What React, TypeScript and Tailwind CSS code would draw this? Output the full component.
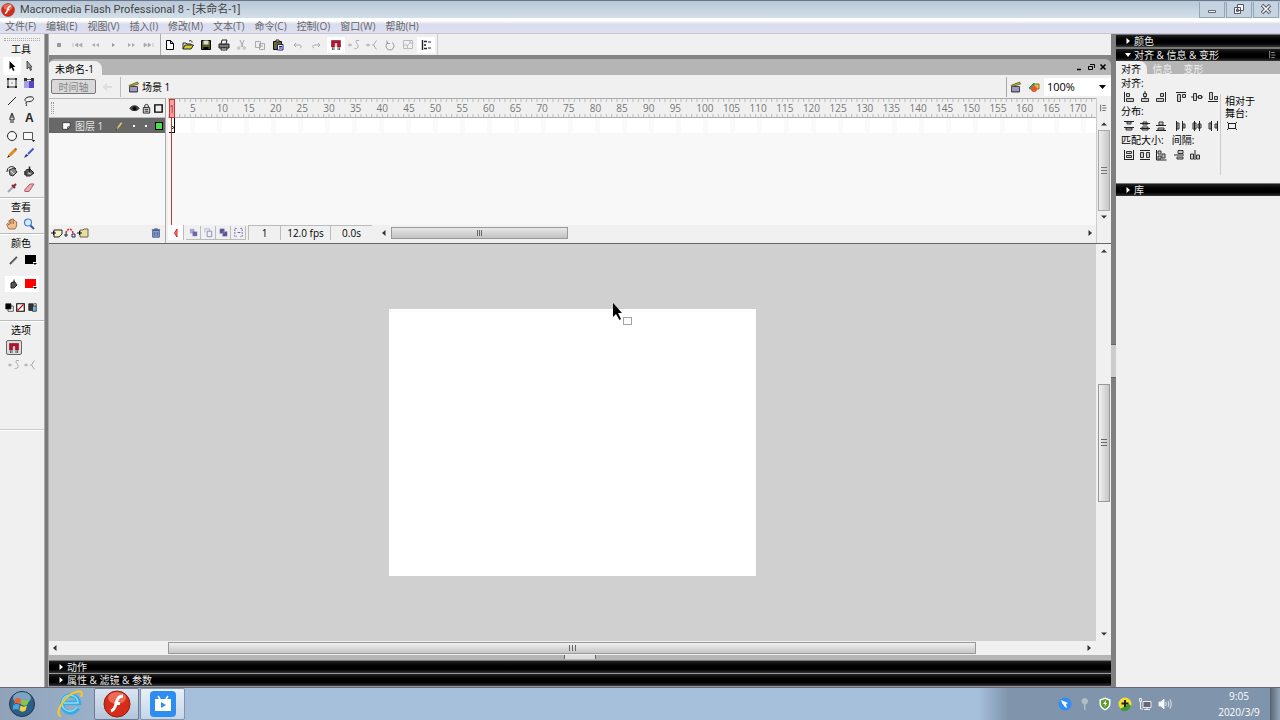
import { type ReactNode } from 'react';

const sans = "font-['Open_Sans','Noto_Sans_CJK_SC',sans-serif]";

const menus = ['文件(F)', '编辑(E)', '视图(V)', '插入(I)', '修改(M)', '文本(T)', '命令(C)', '控制(O)', '窗口(W)', '帮助(H)'];

const rulerMarks = Array.from({ length: 34 }, (_, i) => (i + 1) * 5);
const frames = Array.from({ length: 175 }, (_, i) => i);

interface Item {
    name: string;
    icon: ReactNode;
    active?: boolean;
}

function Icon({ children, className = 'size-3' }: { children: ReactNode; className?: string }) {
    return (
        <svg viewBox="0 0 12 12" className={`${className} shrink-0`} fill="none" stroke="#222" aria-hidden="true">
            {children}
        </svg>
    );
}

const magnet = (
    <Icon>
        <path d="M1.5 1.5h9V8h-3V4h-3v4h-3z" fill="#b5122c" stroke="#7c1226" strokeWidth=".6" />
        <path d="M2.5 8.5v2.5M4 8.5V11M8 8.500V11M9.500 8.500V11" stroke="#555" />
        <path d="M6 5v3" stroke="#caa" />
    </Icon>
);
const smooth = (
    <Icon>
        <path d="M0 6h4M2 4.5v3M11 1.5H8.5c-2 2 2.5 4 1.5 6.5-.5 1.500-2 2-3.500 1.500" stroke="#aaa" />
    </Icon>
);
const straighten = (
    <Icon>
        <path d="M0 6h4M2 4.5v3M10.5 1.5 7.5 6l3 4.5M7.5 6H6" stroke="#aaa" />
    </Icon>
);
const arrowIcon = (
    <Icon>
        <path d="M3.5 1v8.5l2-2 1.500 3.500 1.500-.7L7 7h2.500z" fill="#000" stroke="none" />
    </Icon>
);
const clapper = (
    <Icon>
        <path d="M1.500 5.500h8v5.500h-8z" fill="#6a6496" stroke="#444" />
        <path d="M1 4.500 9.500 1l1 2L2 5.500z" fill="#b5b93c" stroke="#55561c" strokeWidth=".8" />
        <path d="M2 7h7M2 9h7" stroke="#d4d1ea" />
    </Icon>
);

const playback: Item[] = [
    { name: '停止', icon: <Icon><path d="M4 4h4v4H4z" fill="#999" stroke="none" /></Icon> },
    { name: '后退', icon: <Icon><path d="M2 4v4M7 4v4L4 6zM11 4v4L8 6z" fill="#aaa" stroke="#aaa" strokeWidth=".6" /></Icon> },
    { name: '后退一帧', icon: <Icon><path d="M6 4v4L3 6zM10 4v4L7 6z" fill="#aaa" stroke="none" /></Icon> },
    { name: '播放', icon: <Icon><path d="M5 4v4l3-2z" fill="#999" stroke="none" /></Icon> },
    { name: '前进一帧', icon: <Icon><path d="M3 4v4l3-2zM7 4v4l3-2z" fill="#aaa" stroke="none" /></Icon> },
    { name: '转到结尾', icon: <Icon><path d="M1 4v4l3-2zM5 4v4l3-2zM10 4v4" fill="#aaa" stroke="#aaa" strokeWidth=".6" /></Icon> },
];

const fileTools: Item[] = [
    { name: '新建', icon: <Icon><path d="M2.500 1.500h4l3 3v6h-7zM6.500 1.500v3h3" fill="#fff" stroke="#000" /></Icon> },
    { name: '打开', icon: <Icon><path d="M1 10V4h3l1 1h4v2M7 2c2-1 3 0 3 1.500" stroke="#222" /><path d="m1 10 2-4h8.500l-2.500 4z" fill="#d6cf22" stroke="#222" /></Icon> },
    { name: '保存', icon: <Icon><path d="M1.500 1.500h9v9h-9z" fill="#555b12" stroke="#000" /><path d="M3.500 1.500h5v4h-5z" fill="#ddd" stroke="none" /><path d="M3.500 8h5v3h-5z" fill="#000" stroke="none" /></Icon> },
    { name: '打印', icon: <Icon><path d="M1 5h10v4H1z" fill="#777" /><path d="m3 5 1-4h5L8 5zM3 9h6v2H3z" fill="#eee" /></Icon> },
    { name: '剪切', icon: <Icon><path d="m4 1 3 7M8 1 5 8M4 9a1.200 1.200 0 1 0 0 .1M9.500 9a1.200 1.200 0 1 0 0 .1" stroke="#aaa" /></Icon> },
    { name: '复制', icon: <Icon><path d="M1.500 2.500h5v6h-5zM5.500 4.500h5v6h-5zM7 7h2" fill="#eee" stroke="#aaa" /></Icon> },
    { name: '粘贴', icon: <Icon><path d="M1.500 2.500h8v8h-8z" fill="#6c6a2a" stroke="#111" /><path d="M4 1h3v2H4z" fill="#ddd" /><path d="M5.500 5.500h5.500v5.500H5.500z" fill="#fff" stroke="#1b1b80" /><path d="M7 7.500h3M7 9h3" stroke="#1b1b80" /></Icon> },
];
const undoTools: Item[] = [
    { name: '撤消', icon: <Icon><path d="M4 4 2 6l2 2M2 6h5c3 0 3 2.500 1 3" stroke="#aaa" /></Icon> },
    { name: '重做', icon: <Icon><path d="m8 4 2 2-2 2M10 6H5c-3 0-3 2.500-1 3" stroke="#aaa" /></Icon> },
];
const modifyTools: Item[] = [
    { name: '贴紧至对象', icon: magnet, active: true },
    { name: '平滑', icon: smooth },
    { name: '伸直', icon: straighten },
    { name: '旋转与倾斜', icon: <Icon><path d="M4 3.500a4 4 0 1 0 4 0M3 1.500v3h3" stroke="#999" /></Icon> },
    { name: '缩放', icon: <Icon><path d="M1.500 1.500h9v8h-9zM1.500 6h4v3.500M6 6l3-3M7 3h2v2" stroke="#bbb" /></Icon> },
    { name: '对齐', icon: <Icon><path d="M2.500 1v10M4 2.500h3M4 6h2M4 9.500h3" stroke="#222" strokeWidth="1.400" /><path d="M8 3h3M8 9h3" stroke="#222" /></Icon>, active: true },
];

const tools: Item[] = [
    { name: '选择工具', icon: arrowIcon, active: true },
    { name: '部分选取工具', icon: <Icon><path d="M4 1v8l2-2 1.500 3.500L8.500 10 7.500 7H9z" fill="#999" stroke="#333" strokeWidth=".8" /></Icon> },
    { name: '任意变形工具', icon: <Icon><path d="M2 2h8v8H2z" /><path d="M1 1h2v2H1zM9 1h2v2H9zM1 9h2v2H1zM9 9h2v2H9zM5.500 5.500h1v1h-1z" fill="#222" stroke="none" /></Icon> },
    { name: '填充变形工具', icon: <Icon><path d="M1 4h10v7H1z" fill="#5546c4" stroke="none" /><path d="M1 4h5v7H1z" fill="#a8a1e0" stroke="none" /><path d="M1 2.500h10" stroke="#555" /><path d="M1 1h3v3H1zM8 1h3v3H8z" fill="#333" stroke="none" /></Icon> },
    { name: '线条工具', icon: <Icon><path d="m2 10 8-8" /></Icon> },
    { name: '套索工具', icon: <Icon><path d="M3 6.500C0 4 4 1.500 8 1.800S11 6 7 6.500C5 7 3 6 3 8s1.500 1 0 3" /></Icon> },
    { name: '钢笔工具', icon: <Icon><path d="M6 1C5 4 3.500 5 4 8h4c.5-3-1-4-2-7zM4 10h4M6 3v3" fill="#ddd" /></Icon> },
    { name: '文本工具', icon: <span className="font-['Liberation_Sans',sans-serif] text-xs leading-3 font-bold text-[#222]">A</span> },
    { name: '椭圆工具', icon: <Icon><circle cx="6" cy="6" r="4.500" fill="#f8f8f8" /></Icon> },
    { name: '矩形工具', icon: <Icon><path d="M.5 2.500h9v7h-9z" fill="#f8f8f8" stroke="#555" /><path d="M9 10h3l-1.500 2z" fill="#000" stroke="none" /></Icon> },
    { name: '铅笔工具', icon: <Icon><path d="M3.500 8.500 9.500 2.500" stroke="#e08b20" strokeWidth="3" /><path d="m1 11 1.500-3L4 9.500z" fill="#222" stroke="none" /><path d="m9 1.500 1.500 1.500" stroke="#c4552c" strokeWidth="2" /></Icon> },
    { name: '刷子工具', icon: <Icon><path d="m5 7 5.500-5.500" stroke="#4058c8" strokeWidth="2" /><path d="m1 11 2-4 2.500 1.500z" fill="#2b2f6b" stroke="none" /></Icon> },
    { name: '墨水瓶工具', icon: <Icon><path d="M1 7c0-6 6-7 9-3" /><path d="m3 5 5-2 3 4-4 4-3-1z" fill="#888" stroke="#333" /><path d="m5 6 3 3" stroke="#eee" /></Icon> },
    { name: '颜料桶工具', icon: <Icon><path d="m3 5 4-1 4 4-4 3H3z" fill="#666" /><path d="M6.500 7V1.500M2 6v4" strokeWidth="1.500" /><path d="m5 8 3 1" stroke="#ddd" /></Icon> },
    { name: '滴管工具', icon: <Icon><path d="m2 10 5-5" stroke="#9aa" strokeWidth="2" /><path d="m6 3 3 3M8 4l2-2" stroke="#8c2f35" strokeWidth="2.200" /></Icon> },
    { name: '橡皮擦工具', icon: <Icon><path d="M1.500 8 7 2h4L6 9.500H2z" fill="#eea7ae" stroke="#a85f68" /></Icon> },
];

const layerHeads: Item[] = [
    { name: '显示所有图层', icon: <Icon className="size-[11px]"><path d="M1 6c2-4 8-4 10 0-2 3-8 3-10 0z" fill="#555" /><circle cx="6" cy="6" r="2" fill="#000" /></Icon> },
    { name: '锁定所有图层', icon: <Icon className="size-[11px]"><path d="M4 5V3c0-2 4-2 4 0v2M2.500 5h7v6h-7zM4 7h4M4 9h4" fill="#ddd" /></Icon> },
    { name: '显示轮廓', icon: <Icon className="size-[11px]"><path d="M2 2h8v8H2z" stroke="#000" strokeWidth="1.500" fill="#eee" /></Icon> },
];

const onion: Item[] = [
    { name: '绘图纸外观', icon: <Icon className="size-[11px]"><path d="M2 2h5v5H2z" fill="#aaa6d2" stroke="none" /><path d="M5 5h5v5H5z" fill="#6b66a8" stroke="none" /></Icon> },
    { name: '绘图纸外观轮廓', icon: <Icon className="size-[11px]"><path d="M2 2h5v3M2 2v4" stroke="#b5b2d6" /><path d="M4.500 4.500h5v6h-5z" stroke="#8b88b8" /></Icon> },
    { name: '编辑多个帧', icon: <Icon className="size-[11px]"><path d="M2 2h5v5H2zM5 5h5v5H5z" fill="#504a90" stroke="#aaa6d2" strokeWidth=".5" /></Icon> },
    { name: '修改绘图纸标记', icon: <Icon className="size-[11px]"><path d="M4 1.500H2v9h2M8 1.500h2v9H8" stroke="#6b66a8" strokeDasharray="2 1" /><path d="M5 6h3" stroke="#5c579c" /></Icon> },
];

const guides = (lines: string, boxes: string) => (
    <Icon>
        <path d={boxes} fill="#ccc" stroke="#333" />
        <path d={lines} />
    </Icon>
);

const alignIcons: Item[] = [
    { name: '左对齐', icon: guides('M1.500 1v10', 'M3.500 2.500h3v3h-3zM3.500 7.500h7v3h-7z') },
    { name: '水平中齐', icon: guides('M6 0v3M6 5v3', 'M4.500 2.500h3v3h-3zM2.500 7.500h7v3h-7z') },
    { name: '右对齐', icon: guides('M10.500 1v10', 'M5.500 2.500h3v3h-3zM1.500 7.500h7v3h-7z') },
    { name: '上对齐', icon: guides('M1 1.500h10', 'M2.500 3.500h3v7h-3zM7.500 3.500h3v3h-3z') },
    { name: '垂直中齐', icon: guides('M0 6h2M6 6h1M11 6h1', 'M2.500 2.500h3v7h-3zM7.500 4.500h3v3h-3z') },
    { name: '底对齐', icon: guides('M1 10.500h10', 'M2.500 1.500h3v7h-3zM7.500 5.500h3v3h-3z') },
];
const distributeIcons: Item[] = [
    { name: '上缘分布', icon: guides('M1 1.500h10M1 7.500h10', 'M4 2h4v2H4zM3 8h6v2H3z') },
    { name: '垂直居中分布', icon: guides('M1 3.500h10M1 8.500h10', 'M4 2h4v3H4zM3 7h6v3H3z') },
    { name: '下缘分布', icon: guides('M1 5.500h10M1 10.500h10', 'M4 2h4v3H4zM3 8h6v2H3z') },
    { name: '左缘分布', icon: guides('M1.500 1v10M7.500 1v10', 'M2 3h2v6H2zM8 4h2v4H8z') },
    { name: '水平居中分布', icon: guides('M3.500 1v10M8.500 1v10', 'M2 3h3v6H2zM7 4h3v4H7z') },
    { name: '右缘分布', icon: guides('M4.500 1v10M10.500 1v10', 'M2 3h2v6H2zM8 4h2v4H8z') },
];
const matchIcons: Item[] = [
    { name: '匹配宽度', icon: guides('M1.500 1v10M10.500 1v10M1 10.500h10', 'M3.500 2.500h5v2h-5zM3.500 6.500h5v2h-5z') },
    { name: '匹配高度', icon: guides('M1 1.500h10M1 10.500h10', 'M1.500 3.500h3v5h-3zM7.500 3.500h3v5h-3z') },
    { name: '匹配宽和高', icon: guides('M1.500 1v10h10', 'M3 2h3v3H3zM3 7h3v3H3zM7 5h3v4H7z') },
];
const spaceIcons: Item[] = [
    { name: '垂直平均间隔', icon: guides('M1 6h10', 'M5 1.500h5v3H5zM4 8h6v2H4z') },
    { name: '水平平均间隔', icon: guides('M6 1v10', 'M1.500 5h3v5h-3zM7.500 6h3v4h-3z') },
];

function IconRow({ items, className }: { items: Item[]; className: string }) {
    return (
        <div className="flex items-center">
            {items.map((item) => (
                <button
                    key={item.name}
                    aria-label={item.name}
                    className={`${className} flex items-center justify-center ${item.active ? 'bg-white' : ''}`}
                >
                    {item.icon}
                </button>
            ))}
        </div>
    );
}

function Tri({ dir }: { dir: 'left' | 'right' | 'up' | 'down' }) {
    const d = { left: 'M7.5 3v6L4 6z', right: 'M4.5 3v6L8 6z', up: 'M3 7.5h6L6 4.5z', down: 'M3 4.5h6L6 7.5z' }[dir];
    return (
        <svg viewBox="0 0 12 12" className="size-3 shrink-0" fill="#333" aria-hidden="true">
            <path d={d} />
        </svg>
    );
}

function PanelBar({ title, open, menu }: { title: string; open?: boolean; menu?: boolean }) {
    return (
        <button className="flex h-3 w-full shrink-0 items-center bg-linear-to-b from-[#222] via-black via-60% to-[#3a3a3a] pl-1.5 text-left text-[10px] leading-3 text-[#eee]">
            <svg viewBox="0 0 12 12" className="size-3 shrink-0" fill="#fff" aria-hidden="true">
                <path d={open ? 'M3 4h6L6 8z' : 'M4.500 3v6L8 6z'} />
            </svg>
            <span className="grow">{title}</span>
            {menu && (
                <Icon className="mr-0.5 size-[10px]">
                    <path d="M2 1v9M4 3h4M4 6h5M4 9h4" stroke="#aaa" />
                </Icon>
            )}
        </button>
    );
}

function ToolHeading({ children }: { children: ReactNode }) {
    return <h2 className="pr-0.5 text-center text-[10px] leading-4 text-black">{children}</h2>;
}

function Toolbox() {
    return (
        <aside className="flex w-11 shrink-0 flex-col bg-[#f0f0f0] pt-1">
            <div className="mx-1 h-[3px] border-y border-dotted border-[#aaa]" />
            <ToolHeading>工具</ToolHeading>
            <div className="ml-[3px] grid h-[140px] w-[35px] grid-cols-2 grid-rows-8">
                {tools.map((tool) => (
                    <button
                        key={tool.name}
                        aria-label={tool.name}
                        className={`flex items-center justify-center ${tool.active ? 'bg-white' : ''}`}
                    >
                        {tool.icon}
                    </button>
                ))}
            </div>
            <div className="border-y border-t-[#bbb] border-b-white" />
            <ToolHeading>查看</ToolHeading>
            <div className="ml-[3px] flex h-[18px] w-[35px] items-center justify-around">
                <button aria-label="手形工具">
                    <Icon>
                        <path d="M3 11C1 8 0 6 1.500 5.500L3 7V2.500h1.500V1.500H6V1h1.500v1.500H9L10.500 4c.5 3 0 5-1.500 7z" fill="#f0bf8c" stroke="#8c542c" strokeWidth=".8" />
                        <path d="M4.500 3v3M6 2.500V6M7.500 3v3" stroke="#8c542c" strokeWidth=".6" />
                    </Icon>
                </button>
                <button aria-label="缩放工具">
                    <Icon>
                        <circle cx="5" cy="4.500" r="3.500" fill="#d5ecff" stroke="#4a7fd0" strokeWidth="1.200" />
                        <path d="m7.500 7.500 3.500 3.500" stroke="#3a55a8" strokeWidth="2" />
                    </Icon>
                </button>
            </div>
            <div className="border-y border-t-[#bbb] border-b-white" />
            <ToolHeading>颜色</ToolHeading>
            <div className="ml-[5px] flex h-[18px] w-[34px] items-center justify-around">
                <Icon><path d="m2 10 7-7" stroke="#555" strokeWidth="2" /><path d="m3.500 9.500 6-6" stroke="#bbb" strokeWidth=".6" /></Icon>
                <button aria-label="笔触颜色">
                    <Icon><path d="M0 1h11v9H0z" fill="#000" stroke="none" /><path d="M8 8h4v4H8z" fill="#fff" stroke="none" /><path d="M8 9h4l-2 2z" fill="#000" stroke="none" /></Icon>
                </button>
            </div>
            <div className="mt-[7px] ml-[5px] flex h-4 w-[34px] items-center justify-around bg-white">
                <Icon><path d="m3 5 3.500-1.500L9 7l-3 3H3z" fill="#555" /><path d="M6 5V1.500" /></Icon>
                <button aria-label="填充颜色">
                    <Icon><path d="M0 1h11v9H0z" fill="#f00" stroke="none" /><path d="M8 8h4v4H8z" fill="#fff" stroke="none" /><path d="M8 9h4l-2 2z" fill="#000" stroke="none" /></Icon>
                </button>
            </div>
            <div className="mt-2 ml-1 flex h-[14px] w-[34px] items-center justify-around">
                <button aria-label="黑白">
                    <Icon className="size-[9px]"><path d="M4 4h7v7H4z" fill="#fff" /><path d="M1 1h7v7H1z" fill="#000" /></Icon>
                </button>
                <button aria-label="没有颜色">
                    <Icon className="size-[9px]"><path d="M1 1h10v10H1z" fill="#fff" stroke="#000" strokeWidth="1.500" /><path d="M2 10 10 2" stroke="#c00" strokeWidth="1.500" /></Icon>
                </button>
                <button aria-label="交换颜色">
                    <Icon className="size-[9px]"><path d="M1 1h6v9H1z" fill="#333" /><path d="M6 4h5v7H6z" fill="#7ab5d8" /><path d="M8 1h3v3" /></Icon>
                </button>
            </div>
            <div className="mt-1.5 border-y border-t-[#bbb] border-b-white" />
            <ToolHeading>选项</ToolHeading>
            <button aria-label="贴紧至对象" className="mt-0.5 ml-1.5 flex h-[15px] w-4 items-center justify-center rounded-xs border border-[#666] bg-[#ddd]">
                {magnet}
            </button>
            <div className="mt-1 ml-2 flex w-7 justify-between">
                <button aria-label="平滑">{smooth}</button>
                <button aria-label="伸直">{straighten}</button>
            </div>
            <div className="mt-[58px] border-y border-t-[#ccc] border-b-white" />
        </aside>
    );
}

function Timeline() {
    return (
        <section className="flex h-[146px] shrink-0 border-b border-[#666] bg-[#f0f0f0]">
            <div className="flex w-[117px] shrink-0 flex-col border-r border-[#aaa]">
                <div className="flex h-5 items-center justify-between border-y border-[#bbb] pl-0.5">
                    <div className="h-3 w-[3px] border-x border-dotted border-[#999]" />
                    <div className="pr-px">
                        <IconRow items={layerHeads} className="h-3 w-3" />
                    </div>
                </div>
                <div className="flex h-[15px] items-center bg-[#686868] pl-3 text-[10px] leading-4 text-[#e5e5e5]">
                    <Icon className="size-[10px]"><path d="M2 2h9v5L8 10H2z" fill="#fff" stroke="#333" /><path d="M8 10V7h3" /></Icon>
                    <span className="ml-1 grow">图层 1</span>
                    <Icon className="size-[10px]"><path d="m2 10 6-8" stroke="#e3c465" strokeWidth="2" /><path d="m1 11 2-3" /></Icon>
                    <div className="ml-2 size-0.5 bg-white" />
                    <div className="ml-[10px] size-0.5 bg-white" />
                    <div className="mr-0.5 ml-2 size-2 border border-black bg-[#4ae04a]" />
                </div>
                <div className="grow bg-[#f8f8f8]" />
                <div className="flex h-[18px] items-center gap-px px-0.5 pb-[3px]">
                    <button aria-label="插入图层"><Icon><path d="M3 3h8v4L8 10H3z" fill="#f7f4c8" /><path d="M0 6h5M2.500 4v4" stroke="#112" /></Icon></button>
                    <button aria-label="添加运动引导层"><Icon><path d="M2 6c1-5 6-5 7 0" stroke="#d22" strokeDasharray="2 1" strokeWidth="1.500" /><path d="M0 8h4M2 6v4M8 7h3v3H8z" stroke="#225" /></Icon></button>
                    <button aria-label="插入图层文件夹"><Icon><path d="M3 3h3l1-1h4v8H3z" fill="#eadf9a" stroke="#665" /><path d="M0 6h5M2.500 4v4" stroke="#112" /></Icon></button>
                    <button aria-label="删除图层" className="mr-0.5 ml-auto"><Icon className="size-[10px]"><path d="M2 3h8v8H2zM1 2h10M4 1h4M4.500 5v4M7.500 5v4" fill="#8c9fd0" stroke="#334a80" /></Icon></button>
                </div>
            </div>

            <div className="ml-0.5 flex min-w-0 grow flex-col">
                <div className="relative flex grow flex-col">
                    <div className="relative h-5 border-y border-[#aaa]">
                        <svg viewBox="0 0 928 18" preserveAspectRatio="none" className="absolute inset-0 size-full" stroke="#bbb" aria-hidden="true">
                            {frames.map((f) => (
                                <path key={f} d={`M${1 + f * 5.3333} 0v3M${1 + f * 5.3333} 15v3`} />
                            ))}
                        </svg>
                        <div className="grid grid-cols-34 pl-[22px] text-[10px] leading-[18px] text-[#777]">
                            {rulerMarks.map((n) => (
                                <span key={n} className="w-0">{n}</span>
                            ))}
                        </div>
                    </div>
                    <div className="h-[15px] bg-[repeating-linear-gradient(90deg,#fff_0_22px,#fafafa_22px_27px)]" />
                    <div className="grow bg-[#f8f8f8]" />
                    <div className="absolute top-5 left-px h-[15px] w-1.5 border-r border-b border-black bg-white">
                        <div className="mt-2 ml-0.5 size-[3px] rounded-full border border-black" />
                    </div>
                    <div className="absolute top-5 bottom-0 left-[3px] w-px bg-[#cc3333]" />
                    <div className="absolute top-px left-px h-[19px] w-1.5 border border-[#c33] bg-[#f88]/80 text-center text-[10px] leading-[18px] text-[#944]">
                        <span className="-ml-px">1</span>
                    </div>
                </div>
                <div className="flex h-[18px] items-center pb-[3px] text-[10px] leading-[15px] text-black">
                    <button aria-label="帧居中" className="flex h-[15px] w-4 items-center justify-center border-r border-[#bbb] bg-white">
                        <Icon><path d="M7 2v8L4.500 6z" fill="#f88" stroke="#d22" /></Icon>
                    </button>
                    <div className="ml-0.5">
                        <IconRow items={onion} className="h-[14px] w-[15px] border-r border-b border-[#bbb]" />
                    </div>
                    <span className="ml-0.5 h-[15px] w-8 border-t border-l border-[#bbb] text-center">1</span>
                    <span className="h-[15px] w-[50px] border-t border-l border-[#bbb] text-center">12.0 fps</span>
                    <span className="h-[15px] w-[42px] border-t border-l border-[#bbb] text-center">0.0s</span>
                    <div className="ml-1.5 flex grow items-center">
                        <button aria-label="向左滚动"><Tri dir="left" /></button>
                        <div className="ml-px flex grow">
                            <div className="flex h-3 w-[177px] items-center justify-center gap-px border border-[#999] bg-linear-to-b from-[#e8e8e8] to-[#c2c2c2]">
                                <i className="h-1.5 w-px bg-[#666]" />
                                <i className="h-1.5 w-px bg-[#666]" />
                                <i className="h-1.5 w-px bg-[#666]" />
                            </div>
                        </div>
                        <button aria-label="向右滚动"><Tri dir="right" /></button>
                    </div>
                </div>
            </div>

            <div className="flex w-[15px] shrink-0 flex-col items-center border-l border-[#ccc]">
                <button aria-label="时间轴选项" className="flex h-5 items-center">
                    <Icon className="size-[10px]"><path d="M2 2v8M4 3h4M4 6h5M4 9h4" stroke="#555" /></Icon>
                </button>
                <button aria-label="向上滚动"><Tri dir="up" /></button>
                <div className="flex w-3 grow flex-col items-center justify-center gap-0.5 border border-[#aaa] bg-linear-to-r from-[#eee] to-[#c6c6c6]">
                    <i className="h-px w-1.5 bg-[#777]" />
                    <i className="h-px w-1.5 bg-[#777]" />
                    <i className="h-px w-1.5 bg-[#777]" />
                </div>
                <button aria-label="向下滚动" className="mb-5"><Tri dir="down" /></button>
            </div>
        </section>
    );
}

function Stage() {
    return (
        <section className="flex grow flex-col">
            <div className="flex grow">
                <div className="flex grow items-center justify-center bg-[#d0d0d0] py-8">
                    <div className="relative h-[267px] w-[367px] bg-white">
                        <svg viewBox="0 0 20 23" className="absolute -top-1.5 left-[223px] h-[23px] w-5" aria-hidden="true">
                            <path d="M1 0v14l3-3 3.500 6 1.500-1-3-6h4z" fill="#000" />
                            <path d="M11.500 14.500h8v7h-8z" fill="none" stroke="#444" strokeDasharray="1 1" />
                        </svg>
                    </div>
                </div>
                <div className="flex w-[15px] shrink-0 flex-col items-center bg-[#f0f0f0] py-px">
                    <button aria-label="向上滚动"><Tri dir="up" /></button>
                    <div className="flex grow flex-col items-center justify-center">
                        <div className="flex h-[118px] w-3 flex-col items-center justify-center gap-0.5 border border-[#999] bg-linear-to-r from-[#f0f0f0] to-[#c6c6c6]">
                            <i className="h-px w-1.5 bg-[#666]" />
                            <i className="h-px w-1.5 bg-[#666]" />
                            <i className="h-px w-1.5 bg-[#666]" />
                        </div>
                    </div>
                    <button aria-label="向下滚动"><Tri dir="down" /></button>
                </div>
            </div>
            <div className="flex h-[14px] shrink-0 items-center bg-[#f0f0f0] pr-4">
                <button aria-label="向左滚动"><Tri dir="left" /></button>
                <div className="flex grow justify-center">
                    <div className="flex h-3 w-[79%] items-center justify-center gap-0.5 border border-[#999] bg-linear-to-b from-[#f0f0f0] to-[#c6c6c6]">
                        <i className="h-1.5 w-px bg-[#666]" />
                        <i className="h-1.5 w-px bg-[#666]" />
                        <i className="h-1.5 w-px bg-[#666]" />
                    </div>
                </div>
                <button aria-label="向右滚动"><Tri dir="right" /></button>
            </div>
        </section>
    );
}

function DocumentArea() {
    return (
        <main className="flex min-w-0 grow flex-col">
            <div className="flex h-[21px] shrink-0 items-center gap-0.5 bg-[#f0f0f0] pl-px">
                <IconRow items={playback} className="h-4 w-[18px]" />
                <div className="-mr-0.5 h-full w-px bg-[#aaa]" />
                <IconRow items={fileTools} className="h-4 w-[18px]" />
                <IconRow items={undoTools} className="h-4 w-[18px]" />
                <IconRow items={modifyTools} className="h-4 w-[18px]" />
                <div className="h-full w-px bg-[#ccc]" />
            </div>

            <div className="mt-1 flex h-4 shrink-0 items-end justify-between rounded-t-md bg-[#b5b5b5]">
                <button className="h-[14px] rounded-tl-sm rounded-tr-lg bg-[#f0f0f0] pr-2 pl-1.5 text-[10px] leading-4 text-black">未命名-1</button>
                <div className="flex h-full items-center pr-0.5">
                    <button aria-label="最小化文档"><Icon><path d="M4 8.500h4" stroke="#000" strokeWidth="1.500" /></Icon></button>
                    <button aria-label="还原文档"><Icon><path d="M3.500 5.500h4v3h-4zM5 3.500h4.500V7" stroke="#000" /></Icon></button>
                    <button aria-label="关闭文档"><Icon><path d="m3.500 3.500 5 5M8.500 3.500l-5 5" stroke="#000" strokeWidth="1.500" /></Icon></button>
                </div>
            </div>

            <div className="flex h-[23px] shrink-0 items-center bg-[#f0f0f0] text-[10px] leading-4 text-black">
                <button className="ml-0.5 h-[15px] w-[45px] rounded-xs border border-[#777] bg-[#d9d9d9] leading-3 text-[#888]">时间轴</button>
                <button aria-label="返回" className="mx-0.5 flex w-5 justify-center">
                    <Icon><path d="M2 6h8M5 3 2 6l3 3" stroke="#ddd" strokeWidth="2" /></Icon>
                </button>
                <div className="h-5 w-px bg-[#bbb]" />
                <div className="ml-[7px] flex grow items-center gap-0.5">
                    {clapper}
                    <span>场景 1</span>
                </div>
                <div className="flex h-5 items-center gap-1.5 border-l border-[#aaa] pr-1 pl-[3px]">
                    <button aria-label="编辑场景">{clapper}</button>
                    <button aria-label="编辑元件">
                        <Icon><path d="m1 7 5-5v8z" fill="#46a848" stroke="#287" /><path d="M6 3h5v5H6z" fill="#e8c83a" stroke="#863" /><circle cx="6" cy="8" r="3" fill="#e8562a" stroke="none" /></Icon>
                    </button>
                </div>
                <label className="relative flex h-[18px] w-[67px] items-center bg-white">
                    <select aria-label="缩放比例" defaultValue="100%" className="w-full appearance-none pl-[3px] text-[11px] leading-4 outline-none">
                        <option>100%</option>
                        <option>50%</option>
                    </select>
                    <svg viewBox="0 0 8 6" className="pointer-events-none absolute right-1 h-1.5 w-2" aria-hidden="true">
                        <path d="M0 1h7L3.500 5z" fill="#000" />
                    </svg>
                </label>
            </div>

            <Timeline />
            <Stage />

            <div className="flex h-[5px] shrink-0 justify-center bg-[#b5b5b5]">
                <div className="h-1 w-8 border-x border-[#666] bg-[#ddd]" />
            </div>
            <div className="flex shrink-0 flex-col gap-px border-t border-[#777] bg-[#999] pb-px">
                <PanelBar title="动作" />
                <PanelBar title="属性 & 滤镜 & 参数" />
            </div>
        </main>
    );
}

function AlignPanel() {
    return (
        <aside className="flex w-[164px] shrink-0 flex-col bg-[#f0f0f0]">
            <div className="flex flex-col gap-0.5 bg-[#777] pt-px">
                <PanelBar title="颜色" />
                <PanelBar title="对齐 & 信息 & 变形" open menu />
            </div>
            <div className="flex h-[13px] shrink-0 bg-[#b5b5b5] text-[10px] leading-4 text-[#eee]">
                <button className="rounded-tr-lg bg-[#f0f0f0] pr-1.5 pl-[5px] text-black">对齐</button>
                <button className="w-[31px]">信息</button>
                <button className="w-[31px]">变形</button>
            </div>
            <div className="flex h-[109px] shrink-0 pl-[5px] text-[10px] leading-[14px] text-black">
                <div className="w-[99px]">
                    <h3 className="mt-0.5">对齐:</h3>
                    <div className="flex gap-1">
                        <IconRow items={alignIcons.slice(0, 3)} className="h-[14px] w-4" />
                        <IconRow items={alignIcons.slice(3)} className="h-[14px] w-4" />
                    </div>
                    <h3>分布:</h3>
                    <div className="flex gap-1">
                        <IconRow items={distributeIcons.slice(0, 3)} className="h-[15px] w-4" />
                        <IconRow items={distributeIcons.slice(3)} className="h-[15px] w-4" />
                    </div>
                    <div className="flex gap-2">
                        <h3>匹配大小:</h3>
                        <h3>间隔:</h3>
                    </div>
                    <div className="flex gap-0.5">
                        <IconRow items={matchIcons} className="h-[15px] w-4" />
                        <IconRow items={spaceIcons} className="h-[15px] w-4" />
                    </div>
                </div>
                <div className="mt-5 mb-2 flex flex-col items-start border-l border-[#ccc] pt-px pl-1">
                    <p className="leading-3">相对于</p>
                    <p className="leading-3">舞台:</p>
                    <button aria-label="相对于舞台" className="mt-px ml-px">
                        <Icon><path d="M2.500 3.500h7v5h-7zM1 2l2 2M11 2 9 4M1 10l2-2M11 10 9 8" /></Icon>
                    </button>
                </div>
            </div>
            <div className="border-t border-[#777]">
                <PanelBar title="库" />
            </div>
        </aside>
    );
}

function FlashLogo({ className }: { className: string }) {
    return (
        <svg viewBox="0 0 28 28" className={className} aria-hidden="true">
            <circle cx="14" cy="14" r="13" fill="#d62c1a" stroke="#8e2114" />
            <ellipse cx="14" cy="8" rx="9" ry="6" fill="#f5836c" opacity=".7" />
            <path d="M20 6c-5 0-6 4-7 8s-2 6-5 7M11.500 13.500H17" fill="none" stroke="#fff" strokeWidth="3" />
        </svg>
    );
}

function Taskbar() {
    return (
        <footer className="flex h-[33px] shrink-0 items-center border-t border-[#667] bg-linear-to-r from-[#8fa2b8] via-[#a6bfdb] via-15% to-[#a6bfdb]">
            <button aria-label="开始" className="ml-2">
                <svg viewBox="0 0 28 28" className="size-7" aria-hidden="true">
                    <circle cx="14" cy="14" r="12.500" fill="#2b5f88" stroke="#234" />
                    <ellipse cx="14" cy="8" rx="9" ry="6" fill="#9cc3d8" opacity=".7" />
                    <path d="M7 9c2-1.500 4-1.500 6 0l-1 5c-2-1.500-4-1.500-6 0z" fill="#e8602c" />
                    <path d="M14 9.500c2 1.500 4 1.500 7 0l-1.500 5c-2 1.500-4 1.500-6.500 0z" fill="#8cc63c" />
                    <path d="M5.500 15c2-1.500 4-1.500 6 0l-1 5c-2-1.500-4-1.500-6 0z" fill="#4aa4e0" />
                    <path d="M12.500 15.500c2 1.500 4 1.500 6.500 0l-1.500 5c-2 1.500-4 1.500-6 0z" fill="#f8d040" />
                </svg>
            </button>
            <button aria-label="Internet Explorer" className="ml-5">
                <svg viewBox="0 0 28 28" className="size-7" fill="none" aria-hidden="true">
                    <path d="M22 18a8.500 8.500 0 1 1 1-5H8" stroke="#35aee4" strokeWidth="4.500" />
                    <path d="M21 17a8 8 0 1 1 1-4H8" stroke="#8bdcf8" strokeWidth="1.500" />
                    <path d="M5 26C-3 24 9 5 20 2c5-1.500 7 0 5 5" stroke="#f2c82e" strokeWidth="2.200" />
                </svg>
            </button>
            <button aria-label="Flash" className="ml-2.5 flex h-8 w-[45px] items-center justify-center rounded-xs border border-[#6d7c92] bg-linear-to-b from-[#dbe5f1] to-[#b5c6db]">
                <FlashLogo className="size-7" />
            </button>
            <button aria-label="录屏" className="ml-px flex h-8 w-[45px] items-center justify-center rounded-xs border border-[#8293aa] bg-linear-to-b from-[#e8f0f8] to-[#c6d6e8]">
                <svg viewBox="0 0 28 28" className="size-7" aria-hidden="true">
                    <rect x="1" y="1" width="26" height="26" rx="4" fill="#2e8df0" />
                    <path d="M6 9h16v12H6z" fill="#fff" />
                    <path d="m9 6 2 3M19 6l-2 3" stroke="#fff" strokeWidth="1.500" />
                    <path d="m12 12 5 3-5 3z" fill="#2e8df0" />
                </svg>
            </button>
            <div className="ml-auto flex h-full items-center bg-linear-to-r from-transparent to-[#8095ac] to-10% pl-20">
                <div className="flex items-center gap-1.5">
                    <svg viewBox="0 0 14 14" className="size-[14px]" aria-hidden="true"><circle cx="7" cy="7" r="6.500" fill="#2f8df5" /><path d="m3 3 7 3-2 1 1 4-2-1-3-4z" fill="#fff" /></svg>
                    <svg viewBox="0 0 14 14" className="size-[14px]" aria-hidden="true"><path d="M7 1C2 2 3 6 6 7.500V13h1.500V7.500C11 6 11 2 7 1z" fill="#b4bdc6" /></svg>
                    <svg viewBox="0 0 14 14" className="size-[14px]" aria-hidden="true"><path d="m7 .5 5.500 2V7c0 3-2.500 5-5.500 6.500C4 12 1.500 10 1.500 7V2.500z" fill="#fff" /><path d="m7 2 4 1.500V7c0 2-2 4-4 5-2-1-4-3-4-5V3.500z" fill="#5c9c2a" /><path d="M8 3 5 7h2l-.5 3L9 6H7.500z" fill="#fff" /></svg>
                    <svg viewBox="0 0 14 14" className="size-[14px]" aria-hidden="true"><circle cx="7" cy="7" r="6.500" fill="#f0de30" /><path d="M2 12A6.500 6.500 0 0 0 13 9L11 7z" fill="#3f9a33" /><path d="M3.500 6.500h7M7 3v7" stroke="#222" strokeWidth="2" /></svg>
                    <svg viewBox="0 0 14 14" className="size-[14px]" fill="none" stroke="#eee" aria-hidden="true"><path d="M5 4.500h8v6H5zM6 12.500h6M9 10.500v2" fill="#667" /><path d="M1.500 1.500h2v3h-2zM2.500 5v7H5" /></svg>
                    <svg viewBox="0 0 14 14" className="size-[14px]" fill="none" stroke="#eee" aria-hidden="true"><path d="M1 5h2l3-3v10L3 9H1z" fill="#fff" /><path d="M8 5v4M10 4c1 2 1 4 0 6M12 2.500c1.500 3 1.500 6 0 9" /></svg>
                </div>
                <time className="mr-2 ml-11 w-[46px] text-center text-[10px] leading-4 whitespace-nowrap text-white">
                    9:05
                    <br />
                    2020/3/9
                </time>
                <button aria-label="显示桌面" className="h-full w-2.5 border-l border-[#566] bg-linear-to-r from-[#5d6d7f] to-[#94a5b8]" />
            </div>
        </footer>
    );
}

export default function App() {
    return (
        <div className={`${sans} flex min-h-screen flex-col overflow-hidden bg-[#858585]`}>
            <header>
                <div className="flex h-[18px] items-center border-t border-[#67788c] bg-linear-to-b from-[#b9c7d7] to-[#d3e0ea] pl-px">
                    <FlashLogo className="size-3.5" />
                    <h1 className="ml-[5px] grow font-['Roboto','Noto_Sans_CJK_SC',sans-serif] text-[11px] leading-4 text-[#444]">
                        Macromedia Flash Professional 8 - [未命名-1]
                    </h1>
                    <div className="flex h-4 gap-px pr-px">
                        <button aria-label="最小化" className="flex w-[26px] items-center justify-center border border-t-0 border-[#93a5b8] bg-[#c6d4e1]">
                            <Icon><path d="M2.500 7.500h7v2h-7z" fill="#fff" stroke="#667" /></Icon>
                        </button>
                        <button aria-label="还原" className="flex w-[26px] items-center justify-center border border-t-0 border-[#93a5b8] bg-[#c6d4e1]">
                            <Icon><path d="M4.500 1.500h6v6h-6zM1.500 4.500h6v6h-6zM3.500 6.500h2v2h-2z" fill="#fff" stroke="#556" /></Icon>
                        </button>
                        <button aria-label="关闭" className="flex w-[26px] items-center justify-center border border-t-0 border-[#93a5b8] bg-[#c6d4e1]">
                            <Icon><path d="m2 2 8 8M10 2l-8 8" stroke="#556" strokeWidth="3.500" /><path d="m2.500 2.500 7 7M9.500 2.500l-7 7" stroke="#fff" strokeWidth="1.500" /></Icon>
                        </button>
                    </div>
                </div>
                <nav className="flex h-4 items-center gap-2.5 border-b border-[#c5c5d8] bg-linear-to-b from-white from-20% via-[#d8dcec] via-40% to-[#dfe0f2] pl-[5px] text-[10px] leading-4 text-[#666]">
                    {menus.map((m) => (
                        <button key={m}>{m}</button>
                    ))}
                </nav>
            </header>

            <div className="flex grow">
                <Toolbox />
                <div className="w-[5px] shrink-0 border-x border-[#aaa] bg-[#7a7a7a]" />
                <DocumentArea />
                <div className="flex w-[5px] shrink-0 items-center bg-[#7f7f7f]">
                    <div className="h-[34px] w-full border-y border-[#666] bg-[#ccc]" />
                </div>
                <AlignPanel />
            </div>

            <Taskbar />
        </div>
    );
}
